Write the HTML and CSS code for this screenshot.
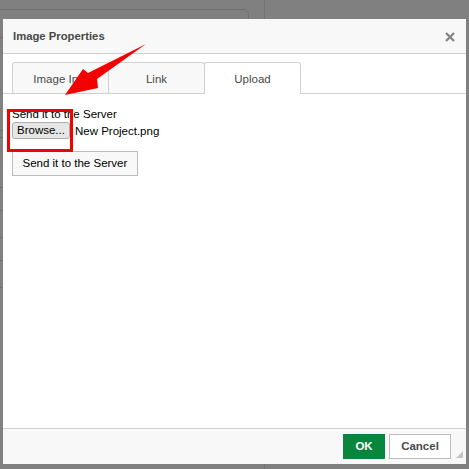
FILE: index.html
```html
<!DOCTYPE html>
<html>
<head>
<meta charset="utf-8">
<link rel="stylesheet" href="styles.css">
</head>
<body>
<div class="page">
  <div class="bg-card"></div>
  <div class="bg-divider"></div>
  <div class="bg-tick t1"></div>
  <div class="bg-tick t2"></div>
  <div class="bg-tick t3"></div>
  <div class="bg-tick t4"></div>
  <div class="bg-tick t5"></div>
  <div class="bg-tick t6"></div>
  <div class="bg-tick t7"></div>

  <div class="dialog">
    <div class="dlg-head">
      <span class="dlg-title">Image Properties</span>
      <svg class="dlg-close" width="10" height="10" viewBox="0 0 10 10"><path d="M1 1 L9 9 M9 1 L1 9" stroke="#878787" stroke-width="2.4" fill="none"/></svg>
    </div>
    <div class="dlg-tabs">
      <div class="tab">Image Info</div>
      <div class="tab">Link</div>
      <div class="tab active">Upload</div>
    </div>
    <div class="dlg-body">
      <div class="field-label">Send it to the Server</div>
      <div class="file-row">
        <span class="browse">Browse...</span>
        <span class="file-name">New Project.png</span>
      </div>
      <div class="send-btn">Send it to the Server</div>
    </div>
    <div class="dlg-foot">
      <span class="btn ok">OK</span>
      <span class="btn cancel">Cancel</span>
      <svg class="grip" width="7" height="7" viewBox="0 0 7 7"><polygon points="7,0 7,7 0,7" fill="#c4c4c4"/></svg>
    </div>
  </div>

  <div class="annot-box"></div>
  <svg class="annot-arrow" width="469" height="469" viewBox="0 0 469 469">
    <polygon points="146,44 97,79 98,88 65,95 83,69 88,73" fill="#f40000"/>
  </svg>
</div>
</body>
</html>
```

FILE: styles.css
```css
html, body {
  margin: 0;
  padding: 0;
}
body {
  font-family: "Liberation Sans", Arial, sans-serif;
  font-size: 11.5px;
  background: #808080;
}
.page {
  position: relative;
  width: 469px;
  height: 469px;
  overflow: hidden;
  background: #808080;
}
.bg-card {
  position: absolute;
  left: -10px;
  top: 9px;
  width: 257px;
  height: 120px;
  border: 1px solid #6f6f6f;
  border-radius: 6px;
}
.bg-divider {
  position: absolute;
  left: 264px;
  top: 0;
  width: 1px;
  height: 469px;
  background: #737373;
}
.bg-tick {
  position: absolute;
  left: 0;
  width: 3px;
  height: 1px;
  background: #6f6f6f;
}
.t1 { top: 37px; }
.t2 { top: 137px; }
.t3 { top: 187px; }
.t4 { top: 210px; }
.t5 { top: 237px; }
.t6 { top: 260px; }
.t7 { top: 287px; }

.dialog {
  position: absolute;
  left: 3px;
  top: 19px;
  width: 463px;
  height: 445px;
  background: #fff;
  display: flex;
  flex-direction: column;
}
.dlg-head {
  height: 35px;
  box-sizing: border-box;
  background: #f8f8f8;
  border-bottom: 1px solid #d1d1d1;
  display: flex;
  align-items: center;
  justify-content: space-between;
  padding: 0 11px 0 10px;
}
.dlg-title {
  font-weight: bold;
  color: #484848;
  font-size: 11.3px;
}
.dlg-close {
  display: block;
  margin-top: 1px;
}
.dlg-tabs {
  margin-top: 8px;
  display: flex;
  padding-left: 9px;
  border-bottom: 1px solid #d1d1d1;
  height: 31px;
}
.tab {
  width: 97px;
  height: 31px;
  box-sizing: border-box;
  border: 1px solid #d1d1d1;
  border-bottom: none;
  border-radius: 3px 3px 0 0;
  background: #f8f8f8;
  color: #484848;
  display: flex;
  align-items: center;
  justify-content: center;
  margin-right: -1px;
  padding-top: 1px;
}
.tab.active {
  background: #fff;
  height: 32px;
  margin-bottom: -1px;
  position: relative;
}
.dlg-body {
  padding: 13px 9px 0 9px;
  color: #000;
  flex: 1;
}
.field-label {
  line-height: 14px;
}
.file-row {
  display: flex;
  align-items: center;
  margin-top: 1px;
}
.browse {
  height: 17px;
  box-sizing: border-box;
  border: 1px solid #adadad;
  border-radius: 3px;
  background: #e6e6e6;
  padding: 0 4px;
  line-height: 15px;
  color: #000;
}
.file-name {
  margin-left: 5px;
}
.send-btn {
  display: inline-block;
  margin-top: 12px;
  height: 25px;
  box-sizing: border-box;
  border: 1px solid #bcbcbc;
  background: #f8f8f8;
  padding: 0 9.5px;
  line-height: 23px;
  color: #000;
}
.dlg-foot {
  height: 36px;
  box-sizing: border-box;
  background: #f8f8f8;
  border-top: 1px solid #d1d1d1;
  display: flex;
  justify-content: flex-end;
  align-items: flex-start;
  padding: 5px 15px 0 0;
  gap: 4px;
  position: relative;
}
.btn {
  height: 25px;
  box-sizing: border-box;
  line-height: 23px;
  font-weight: bold;
  text-align: center;
  border: 1px solid;
}
.ok {
  width: 42px;
  background: #09863e;
  border-color: #09863e;
  color: #fff;
}
.cancel {
  width: 62px;
  background: #fff;
  border-color: #bcbcbc;
  color: #484848;
}
.grip {
  position: absolute;
  right: 3px;
  bottom: 6px;
}
.annot-box {
  position: absolute;
  left: 7px;
  top: 109px;
  width: 66px;
  height: 43px;
  box-sizing: border-box;
  border: 3px solid #f40000;
}
.annot-arrow {
  position: absolute;
  left: 0;
  top: 0;
}
```
